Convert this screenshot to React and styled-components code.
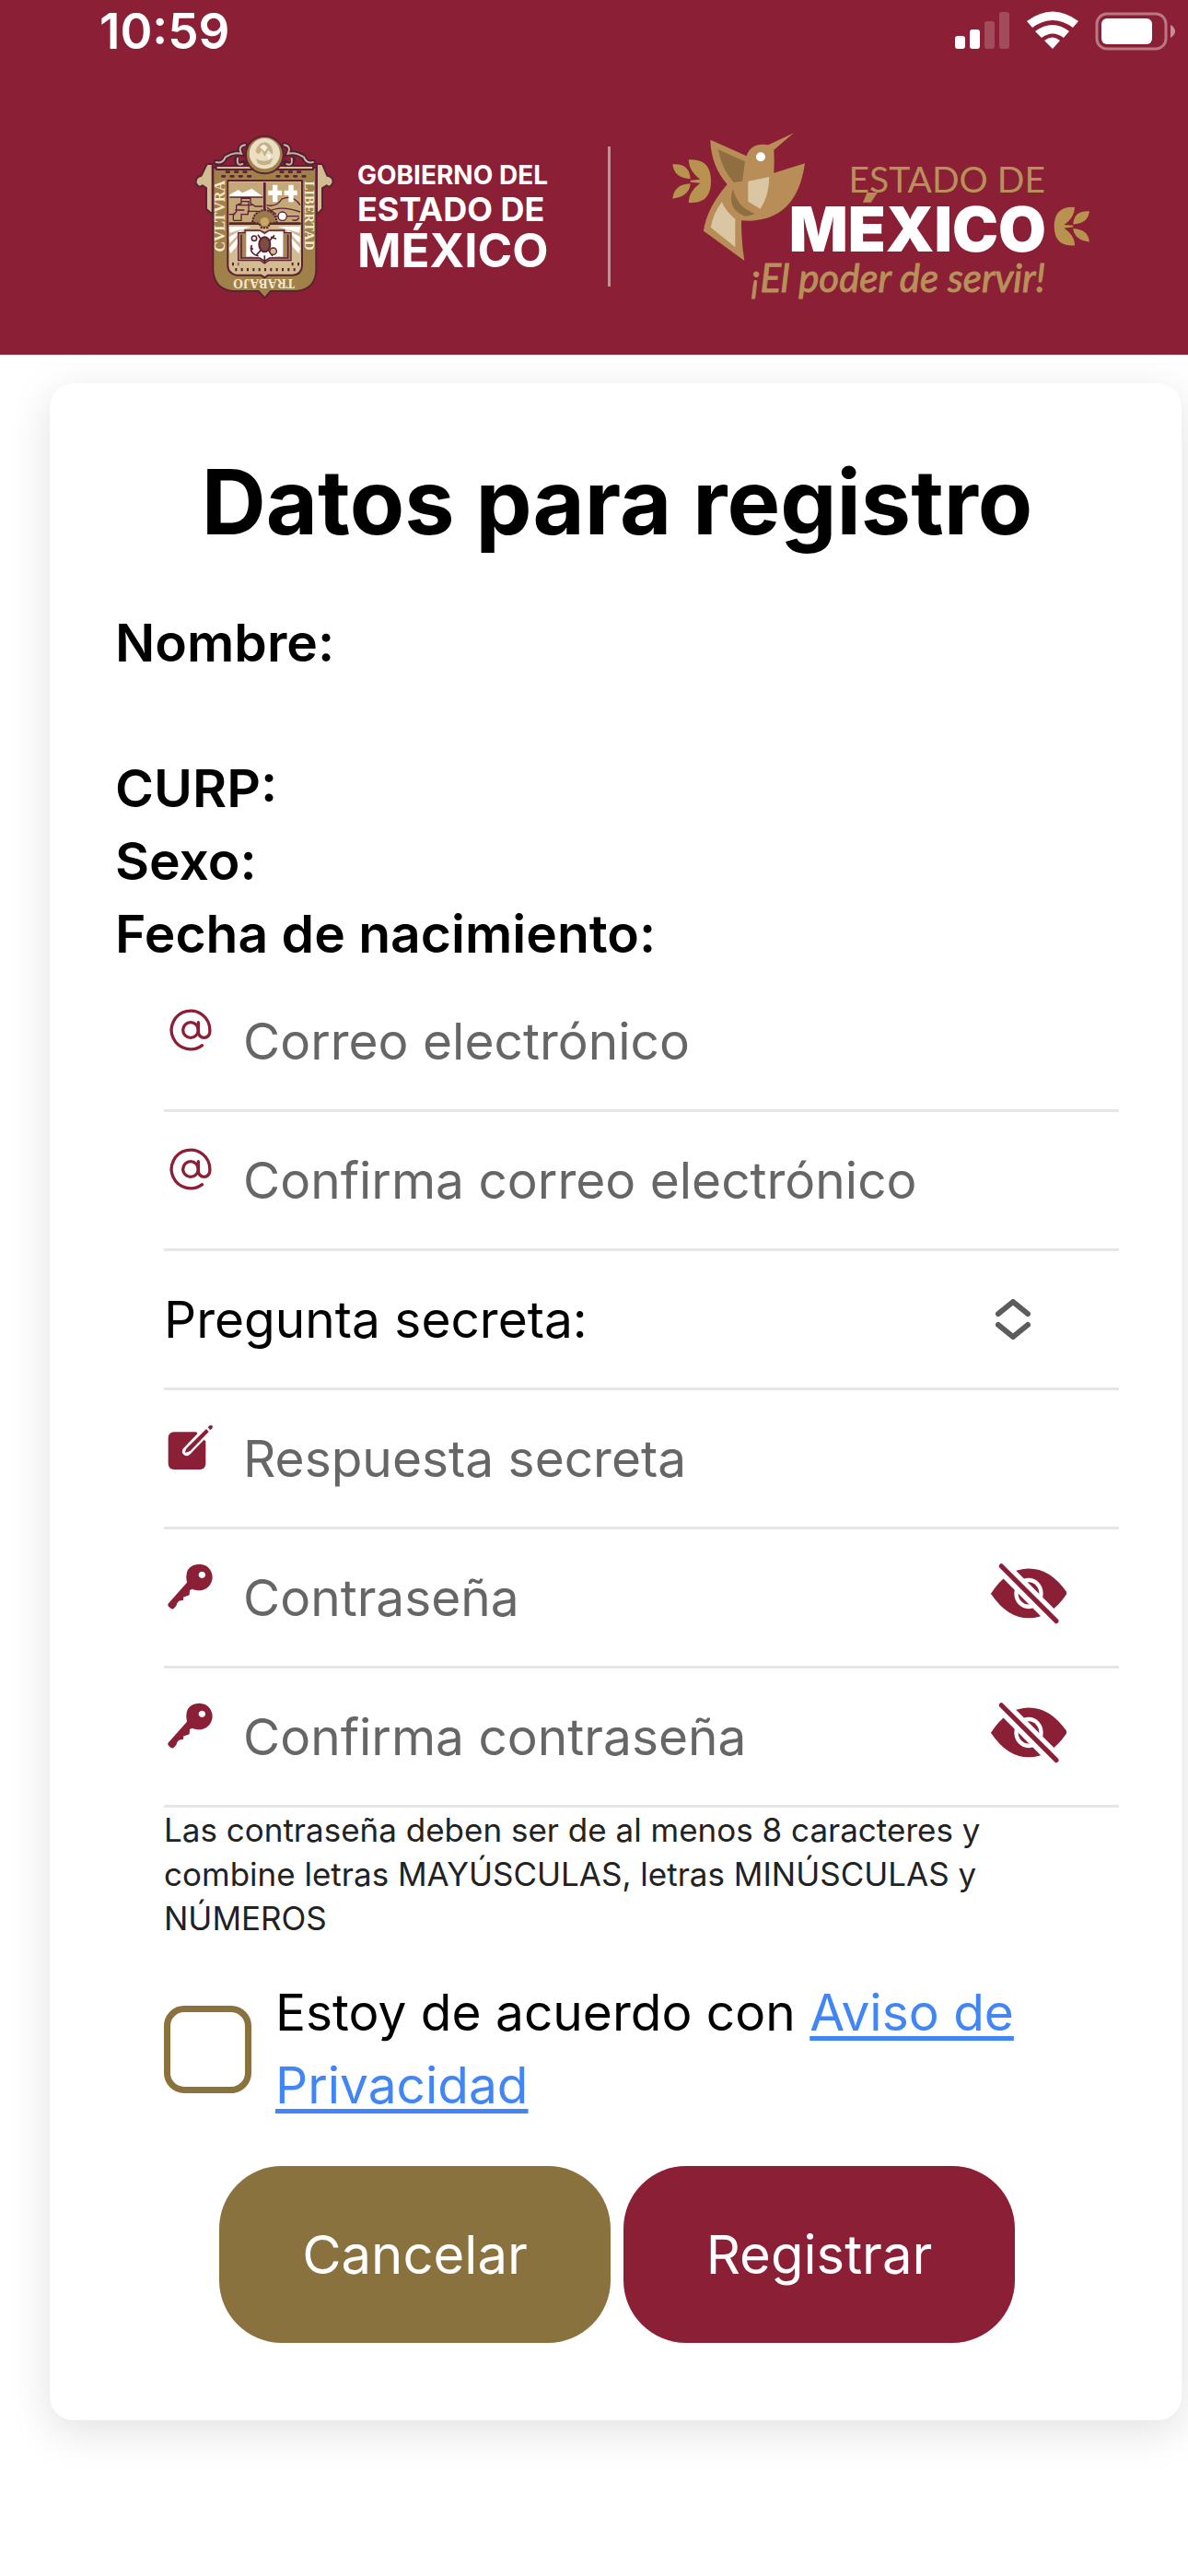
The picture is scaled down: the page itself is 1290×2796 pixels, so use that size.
import React, { useState } from "react"
import styled, { createGlobalStyle } from "styled-components"
import { AtSign } from "lucide-react"

const wine = "#8a1f35"
const gold = "#8a723e"

const App = () => {
  const [visible, setVisible] = useState({})
  const toggle = name => setVisible({ ...visible, [name]: !visible[name] })

  return (
    <Page>
      <GlobalStyle />
      <Header>
        <StatusBar>
          <Time>10:59</Time>
          <StatusIcons />
        </StatusBar>
        <LogoBar>
          <CoatOfArms />
          <Government>
            <GovLine size={28} height={34}>
              GOBIERNO DEL
            </GovLine>
            <GovLine size={36} height={40}>
              ESTADO DE
            </GovLine>
            <GovLine size={51} height={50}>
              MÉXICO
            </GovLine>
          </Government>
          <Divider />
          <StateBrand />
        </LogoBar>
      </Header>
      <Card>
        <Title>Datos para registro</Title>
        <Person>
          <Datum lines={2}>Nombre:</Datum>
          <Datum>CURP:</Datum>
          <Datum>Sexo:</Datum>
          <Datum>Fecha de nacimiento:</Datum>
        </Person>
        <Form onSubmit={e => e.preventDefault()}>
          <Row>
            <RowIcon>
              <AtSign size={50} strokeWidth={1.6} />
            </RowIcon>
            <Input
              type="email"
              aria-label="Correo electrónico"
              placeholder="Correo electrónico"
            />
          </Row>
          <Row>
            <RowIcon>
              <AtSign size={50} strokeWidth={1.6} />
            </RowIcon>
            <Input
              type="email"
              aria-label="Confirma correo electrónico"
              placeholder="Confirma correo electrónico"
            />
          </Row>
          <Row>
            <RowLabel htmlFor="pregunta">Pregunta secreta:</RowLabel>
            <Select id="pregunta" defaultValue="">
              <option value=""></option>
            </Select>
            <Chevrons viewBox="0 0 38 44">
              <path d="M3 16 19 3l16 13M3 28l16 13 16-13" />
            </Chevrons>
          </Row>
          <Row>
            <RowIcon>
              <EditIcon />
            </RowIcon>
            <Input
              type="text"
              aria-label="Respuesta secreta"
              placeholder="Respuesta secreta"
            />
          </Row>
          <Row>
            <RowIcon>
              <KeyIcon />
            </RowIcon>
            <Input
              type={visible.pass ? "text" : "password"}
              aria-label="Contraseña"
              placeholder="Contraseña"
            />
            <EyeButton
              type="button"
              aria-label="Mostrar contraseña"
              onClick={() => toggle("pass")}
            >
              <EyeOffIcon />
            </EyeButton>
          </Row>
          <Row>
            <RowIcon>
              <KeyIcon />
            </RowIcon>
            <Input
              type={visible.confirm ? "text" : "password"}
              aria-label="Confirma contraseña"
              placeholder="Confirma contraseña"
            />
            <EyeButton
              type="button"
              aria-label="Mostrar confirmación"
              onClick={() => toggle("confirm")}
            >
              <EyeOffIcon />
            </EyeButton>
          </Row>
          <Hint>
            Las contraseña deben ser de al menos 8 caracteres y combine letras
            MAYÚSCULAS, letras MINÚSCULAS y NÚMEROS
          </Hint>
          <Agreement>
            <Checkbox type="checkbox" id="aviso" />
            <label htmlFor="aviso">
              Estoy de acuerdo con <a href="#aviso">Aviso de Privacidad</a>
            </label>
          </Agreement>
        </Form>
        <Actions>
          <Button type="button" color={gold}>
            Cancelar
          </Button>
          <Button type="submit" color={wine}>
            Registrar
          </Button>
        </Actions>
      </Card>
    </Page>
  )
}

const StatusIcons = () => (
  <svg width="240" height="44" viewBox="0 0 240 44" fill="#fff">
    <rect x="1" y="27" width="11" height="14" rx="3" />
    <rect x="17" y="20" width="11" height="21" rx="3" />
    <rect x="33" y="11" width="11" height="30" rx="3" opacity=".2" />
    <rect x="49" y="1" width="11" height="40" rx="3" opacity=".2" />
    <path d="M79 11Q107-10 135 11L129 18Q107 2 85 18Z" />
    <path d="M88 22Q107 8 125 22L119 29Q107 20 95 29Z" />
    <path d="M98 32Q107 25 115 32L107 41Z" />
    <rect
      x="155"
      y="3"
      width="75"
      height="38"
      rx="11"
      fill="none"
      stroke="#fff"
      strokeWidth="3"
      opacity=".4"
    />
    <rect x="160" y="8" width="55" height="28" rx="6" />
    <path d="M235 15Q240 18 240 22Q240 26 235 29Z" opacity=".5" />
  </svg>
)

const EditIcon = () => (
  <svg width="50" height="50" viewBox="68 140 150 150">
    <rect x="70" y="165" width="122" height="122" rx="18" fill={wine} />
    <path d="M164 160H198V194H191L162 166Z" fill="#fff" />
    <path
      d="M184 172L130 228"
      stroke="#fff"
      strokeWidth="29"
      strokeLinecap="round"
    />
    <path d="M194 155L202 164L142 226Q132 232 125 232Q124 226 130 218Z" fill={wine} />
    <path d="M199 150L205 144Q211 142 214 145Q216 149 213 153L207 159Z" fill={wine} />
  </svg>
)

const KeyIcon = () => (
  <svg width="50" height="50" viewBox="68 592 150 150" fill={wine}>
    <path
      fillRule="evenodd"
      d="M172 594a43 43 0 1 1-14 84q-6 0-9-3l-9 4-1 16-12 4-7 2-1 10-14 3-6 7-3 9-9 10q-6 2-16-8-4-5 0-10L131 654Q122 612 150 599 160 594 172 594ZM180 618a11 11 0 1 0 .1 0Z"
    />
  </svg>
)

const EyeOffIcon = () => (
  <svg width="84" height="67" viewBox="104 946 252 201">
    <g transform="scale(1 1.07)">
      <path
        d="M108 977Q160 902 230 902Q300 902 352 972Q355 977 352 982Q300 1053 230 1053Q160 1053 108 980Z"
        fill={wine}
      />
      <circle cx="230" cy="978" r="47" fill="#fff" />
      <circle cx="230" cy="978" r="34" fill={wine} />
      <path d="M120 876L340 1082" stroke="#fff" strokeWidth="46" />
      <path
        d="M141 895L320 1062"
        stroke={wine}
        strokeWidth="15"
        strokeLinecap="round"
      />
    </g>
  </svg>
)

const CoatOfArms = () => (
  <svg width="154" height="182" viewBox="60 40 462 546">
    <g stroke="#5c2233" strokeWidth="6" strokeLinejoin="round">
      <path
        d="M122 142H104L86 180Q66 184 68 204Q76 222 90 212L102 220V288L122 306ZM462 142H480L496 180Q518 184 514 204Q506 222 494 212L480 220V288L462 306Z"
        fill="#d3bb92"
      />
      <path
        d="M124 154H460V490Q456 550 396 556H312L292 578L272 556H188Q130 550 124 490Z"
        fill="#a08149"
      />
      <path d="M134 148H450V160H134Z" fill="#d3bb92" />
      <path
        d="M172 196H414V474Q412 502 384 504H304L292 512L280 504H200Q174 500 172 474Z"
        fill="#d3bb92"
      />
    </g>
    {/* scrolls at both sides of the medallion */}
    <g fill="none" stroke="#4c2233" strokeWidth="17" strokeLinecap="round">
      <path d="M134 136Q156 142 164 120Q190 102 216 108Q204 84 228 80M450 136Q428 142 420 120Q394 102 368 108Q380 84 356 80M200 126Q200 150 224 138M384 126Q384 150 360 138" />
    </g>
    <g fill="none" stroke="#cfb0a0" strokeWidth="6" strokeLinecap="round">
      <path d="M134 136Q156 142 164 120Q190 102 216 108Q204 84 228 80M450 136Q428 142 420 120Q394 102 368 108Q380 84 356 80M204 124Q200 150 220 142M380 124Q384 150 364 142" />
    </g>
    <circle cx="292" cy="112" r="61" fill="#a08149" stroke="#5c2233" strokeWidth="6" />
    <circle cx="292" cy="108" r="50" fill="#eadfc4" />
    <path
      d="M262 100Q272 68 300 72Q322 84 318 112L304 96 292 118 282 96Q272 120 262 100ZM264 124Q290 142 320 122L312 140Q290 152 270 140Z"
      fill="#c7b184"
    />
    <path d="M276 86l14-8 12 10-10 14zM300 108l14 6-10 12z" fill="#fff" opacity=".8" />
    {/* bees above and below the inner field */}
    <g stroke="#5c2233" strokeWidth="8" strokeLinecap="round" strokeDasharray="8 20">
      <path d="M168 168H246M154 182H246M344 168H424M332 182H440" />
    </g>
    <g stroke="#5c2233" strokeWidth="10" strokeDasharray="6 13">
      <path d="M186 468H208M380 468H406M196 486H392" />
    </g>
    {/* quarters */}
    <path d="M176 202H288V334H176Z" fill="#c4a877" />
    <path d="M296 202H410V334H296Z" fill="#c4a877" />
    <path d="M178 242L206 226 220 236 250 222 284 246V250H178Z" fill="#fff" />
    <g stroke="#5c2233" strokeWidth="4" fill="none">
      <path d="M178 250H286M190 326V306L200 298V276L216 270V254H246V270L262 280H286M190 326H216V306H238V296H270M206 276H250M218 264H240V300M196 292H226M176 306H196" />
      <path d="M298 276Q330 284 348 256Q384 240 408 276M300 300Q340 274 408 298M320 312H404M382 324Q398 330 404 316M300 284L330 306" />
    </g>
    <path
      d="M318 210H334V228H348V244H334V266H318V244H304V228H318ZM370 210H386V228H398V244H386V266H370V244H356V228H370Z"
      fill="#fff"
    />
    <circle cx="350" cy="312" r="14" fill="#fff" stroke="#5c2233" strokeWidth="4" />
    <path d="M176 336H410M292 202V300" stroke="#5c2233" strokeWidth="8" />
    {/* rays and open book */}
    <path
      d="M176 346L250 346 178 366ZM176 380L226 352 178 400ZM176 416L214 372 200 412 180 434ZM408 346L334 346 406 366ZM408 380L358 352 406 400ZM408 416L370 372 384 412 404 434Z"
      fill="#fff"
    />
    <path
      d="M206 366H228V358H276L292 366 308 358H356V366H378V456H306L292 466 278 456H206Z"
      fill="#a5875a"
      stroke="#5c2233"
      strokeWidth="4"
    />
    <path
      d="M232 362H278L292 372 306 362H352V444Q312 440 292 456Q272 440 232 444Z"
      fill="#fff"
    />
    <g fill="none" stroke="#5c2233" strokeWidth="5">
      <path d="M216 372V448H276L292 458 308 448H368V372" />
      <path d="M250 406Q240 432 272 442M270 372L318 442M324 374L264 440M246 412L254 420M312 380L330 386M292 440V466" />
      <circle cx="258" cy="384" r="8" />
    </g>
    <circle cx="320" cy="426" r="11" fill="#d3bb92" stroke="#5c2233" strokeWidth="4" />
    <ellipse
      cx="292"
      cy="404"
      rx="18"
      ry="24"
      fill="#7c4b42"
      stroke="#5c2233"
      strokeWidth="6"
    />
    <path
      d="M252 332Q256 296 292 292Q328 296 332 332L310 336 302 350H282L274 336Z"
      fill="#9b7a4d"
      stroke="#5c2233"
      strokeWidth="6"
      strokeDasharray="7 3"
    />
    <circle cx="292" cy="330" r="14" fill="#c9a95f" />
    <g
      fill="#f3ead2"
      fontFamily="'Liberation Serif', serif"
      fontWeight="bold"
      textAnchor="middle"
    >
      <text transform="translate(162 312) rotate(-90)" fontSize="48">
        CVLTVRA
      </text>
      <text transform="translate(422 310) rotate(90)" fontSize="44">
        LIBERTAD
      </text>
      <text transform="translate(290 516) rotate(180)" fontSize="42">
        TRABAJO
      </text>
    </g>
  </svg>
)

const Leaf = () => (
  <path
    d="M142 130Q215 125 215 200Q215 275 142 270Q142 234 180 206L148 203V197L180 194Q144 170 142 130ZM90 145Q145 140 148 193Q95 190 90 145ZM90 257Q95 210 148 208Q145 250 90 257Z"
    fill="#b8924f"
  />
)

const StateBrand = () => (
  <svg width="460" height="190" viewBox="0 0 460 190">
    <defs>
      {/* the accent keeps the gold of the line above */}
      <linearGradient
        id="accent"
        gradientUnits="userSpaceOnUse"
        x1="0"
        y1="83"
        x2="0"
        y2="84"
      >
        <stop offset="0" stopColor="#b88a55" />
        <stop offset="1" stopColor="#fff" />
      </linearGradient>
    </defs>
    <g transform="scale(.3333) translate(-80 -30)">
      <Leaf />
      <g transform="translate(1531 169) scale(-.92 .89)">
        <Leaf />
      </g>
      <path
        d="M213 65L331 118Q342 80 385 80L402 82L485 43L420 98Q422 130 420 173L521 142Q496 322 345 329L314 328Q314 400 324 459L191 362Q200 290 268 210Q215 150 213 65Z"
        fill="#b88d57"
      />
      <path d="M238 97L326 136L317 200L289 204Q250 160 238 97Z" fill="#8f6e3f" />
      <path d="M287 225Q300 285 358 305Q345 312 326 314Q264 290 287 225Z" fill="#8f6e3f" />
      <path d="M336 200L405 186Q404 250 376 290L336 266Z" fill="#dac6a2" />
      <path d="M250 268Q265 300 294 323V415L214 350Q222 306 250 268Z" fill="#dac6a2" />
      <circle cx="377" cy="121" r="15" fill="#fff" />
    </g>
    <g textAnchor="end">
      <text x="408" y="69" fontFamily="Lato, sans-serif" fontSize="39" fill="#b8905a">
        ESTADO DE
      </text>
      <text
        x="409"
        y="133"
        fontFamily="Inter, sans-serif"
        fontWeight="900"
        fontSize="67"
        fill="url(#accent)"
      >
        MÉXICO
      </text>
      <text
        x="408"
        y="177"
        fontFamily="'Liberation Sans Narrow', Lato, sans-serif"
        fontStyle="italic"
        fontSize="42"
        fill="#b8905a"
        stroke="#b8905a"
      >
        ¡El poder de servir!
      </text>
    </g>
  </svg>
)

const GlobalStyle = createGlobalStyle`
  * {
    box-sizing: border-box;
  }
  body {
    margin: 0;
    background: #fff;
    color: #000;
    font-family: Inter, "Liberation Sans", sans-serif;
    font-size: 55px;
  }
  svg {
    display: block;
    flex-shrink: 0;
  }
`

const Page = styled.div`
  min-height: 100vh;
`

const Header = styled.header`
  background: ${wine};
  color: #fff;
`

const StatusBar = styled.div`
  display: flex;
  justify-content: space-between;
  align-items: center;
  height: 68px;
  padding: 0 14px 0 108px;
`

const Time = styled.span`
  font-size: 53px;
  font-weight: 600;
`

const LogoBar = styled.div`
  display: flex;
  align-items: center;
  padding: 72px 0 55px 210px;
`

const Government = styled.div`
  margin-left: 24px;
`

const GovLine = styled.div`
  font-size: ${p => p.size}px;
  line-height: ${p => p.height}px;
  font-weight: 700;
  white-space: nowrap;
`

const Divider = styled.div`
  width: 3px;
  height: 152px;
  margin: 0 64px;
  background: rgba(255, 255, 255, 0.5);
`

const Card = styled.main`
  margin: 31px 7px 168px 54px;
  padding: 68px 68px 84px 71px;
  border-radius: 26px;
  background: #fff;
  box-shadow: 0 12px 48px rgba(0, 0, 0, 0.12);
`

const Title = styled.h1`
  margin: 0 0 52px;
  font-size: 97px;
  line-height: 122px;
  font-weight: 700;
  text-align: center;
`

const Person = styled.div`
  font-size: 57px;
  font-weight: 600;
  line-height: 79px;
`

const Datum = styled.div`
  min-height: ${p => (p.lines || 1) * 79}px;
`

const Form = styled.form`
  padding: 3px 0 0 53px;
`

const Row = styled.div`
  display: flex;
  align-items: center;
  height: 151px;
  border-bottom: 3px solid #e6e6e6;
`

const RowIcon = styled.span`
  width: 86px;
  padding: 0 0 24px 4px;
  color: ${wine};
`

const Input = styled.input`
  flex: 1;
  min-width: 0;
  padding: 0;
  border: 0;
  outline: 0;
  background: none;
  font: inherit;
  &::placeholder {
    color: #666;
    opacity: 1;
  }
`

const RowLabel = styled.label`
  white-space: nowrap;
`

const Select = styled.select`
  flex: 1;
  min-width: 0;
  height: 100%;
  border: 0;
  background: none;
  appearance: none;
  font: inherit;
`

const Chevrons = styled.svg`
  width: 38px;
  height: 44px;
  margin-right: 96px;
  fill: none;
  stroke: #5c5c5c;
  stroke-width: 6px;
  stroke-linecap: round;
  stroke-linejoin: round;
`

const EyeButton = styled.button`
  margin-right: 56px;
  padding: 0 0 10px;
  border: 0;
  background: none;
`

const Hint = styled.p`
  margin: 0;
  padding-right: 80px;
  color: #222;
  font-size: 35px;
  line-height: 48px;
`

const Agreement = styled.div`
  display: flex;
  align-items: center;
  gap: 26px;
  padding-top: 39px;
  line-height: 79px;
  a {
    color: #4285f4;
    text-decoration-thickness: 5px;
    text-underline-offset: 6px;
    text-decoration-skip-ink: none;
  }
`

const Checkbox = styled.input`
  flex-shrink: 0;
  width: 95px;
  height: 95px;
  margin: 0;
  appearance: none;
  border: 7px solid ${gold};
  border-radius: 22px;
  &:checked {
    background: ${gold};
  }
`

const Actions = styled.div`
  display: flex;
  justify-content: center;
  gap: 14px;
  padding-top: 48px;
`

const Button = styled.button`
  min-width: 425px;
  height: 192px;
  border: 0;
  border-radius: 68px;
  background: ${p => p.color};
  color: #fff;
  font-family: inherit;
  font-size: 58px;
`

export default App
